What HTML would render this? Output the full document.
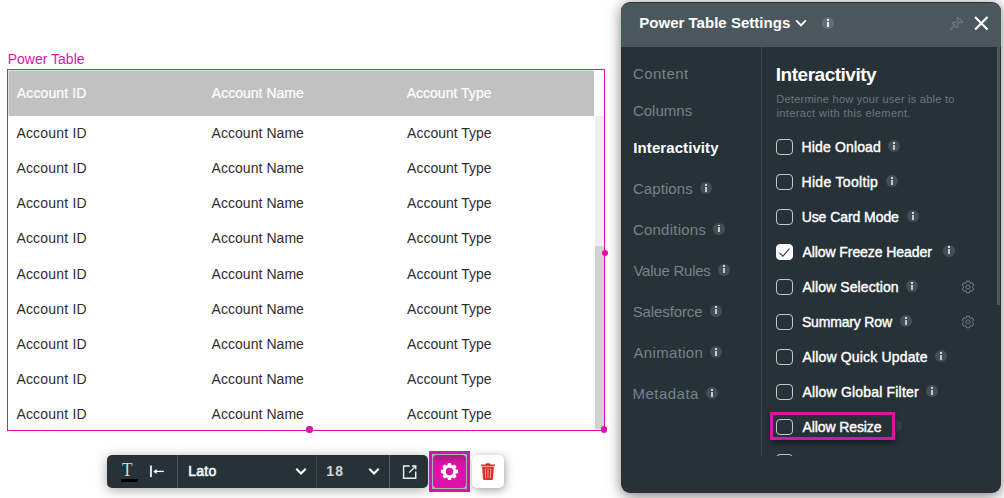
<!DOCTYPE html>
<html>
<head>
<meta charset="utf-8">
<title>Power Table Settings</title>
<style>
html,body{margin:0;padding:0;}
body{width:1004px;height:498px;position:relative;overflow:hidden;background:#ffffff;font-family:"Liberation Sans",sans-serif;}
.a{position:absolute;}
.t{position:absolute;line-height:20px;white-space:nowrap;}
/* table */
#tbl{left:7px;top:69px;width:596px;height:360px;border:1px solid #dc12a9;background:#fff;}
#thead{left:9px;top:71px;width:585px;height:44.7px;background:#c1c1c1;box-shadow:-1px -1px 0 #d3e7d7;}
#strack{left:595px;top:116px;width:9px;height:314px;background:#efefef;}
#sthumb{left:595px;top:246px;width:8.7px;height:183.3px;background:#d2d2d2;}
.dot{width:6.4px;height:6.4px;border-radius:50%;background:#dc12a9;}
/* toolbar */
#tb{left:107px;top:455px;width:321px;height:33px;background:#263238;border-radius:5px;box-shadow:0 2px 12px rgba(0,0,0,.34);}
.dv{width:1px;top:455px;height:33px;background:#46545b;}
#gearhl{left:429px;top:451px;width:35px;height:35px;border:3px solid #dc12a9;background:#a9b8ae;}
#gearbtn{left:433px;top:455px;width:33px;height:33px;border-radius:4px;background:linear-gradient(#ab1b89 0px,#b5188f 3px,#d213a2 7px,#dc12a9 11px);}
#trash{left:471.5px;top:455px;width:32px;height:33px;border-radius:5px;background:#fff;box-shadow:1px 2px 8px rgba(0,0,0,.38);}
/* panel */
#panel{left:621px;top:2px;width:380px;height:490.7px;border-radius:9px;background:#263238;overflow:hidden;box-shadow:0 2.5px 14px rgba(0,0,0,.5);}
#phead{left:0;top:1px;width:380px;height:44px;background:#4a585e;border-radius:8px 8px 0 0;}
#pdiv{left:140px;top:45px;width:1px;height:409px;background:#3b484e;}
#pscroll{display:none;}
#pthumb{left:376px;top:45px;width:3px;height:258px;background:#4a585e;}
.cb{width:15px;height:14px;border:1px solid #c6c8c8;border-radius:4px;left:776px;}
.cb.on{background:#fff;border-color:#fff;}
.info{width:12px;height:12px;border-radius:50%;background:#444f55;}
.info i{position:absolute;left:5px;top:1.8px;width:2px;height:1.8px;background:#d4d8da;}
.info b{position:absolute;left:5px;top:4.5px;width:2px;height:5px;background:#c4c9cb;}
#hl{left:770px;top:412px;width:119px;height:22px;border:3px solid #dc12a9;box-shadow:0 3px 6px rgba(0,0,0,.45);}
</style>
</head>
<body>
<!-- canvas: table -->
<div class="a" id="tbl"></div>
<div class="a" id="thead"></div>
<div class="a" id="strack"></div>
<div class="a" id="sthumb"></div>
<div class="a dot" style="left:601.7px;top:249.7px"></div>
<div class="a dot" style="left:306.4px;top:426.2px"></div>
<div class="a dot" style="left:600.8px;top:426.2px"></div>

<!-- toolbar -->
<div class="a" id="tb"></div>
<div class="a dv" style="left:177px;background:#4a585e"></div>
<div class="a dv" style="left:315.6px;background:#3a474d"></div>
<div class="a dv" style="left:389px;background:#56646b"></div>
<span class="a" style="left:122.4px;top:458.6px;font-family:'Liberation Serif',serif;font-size:18.4px;line-height:22px;color:#d3d8da;transform:scaleX(.93);transform-origin:0 0">T</span>
<div class="a" style="left:121px;top:479px;width:17px;height:3px;background:#000"></div>
<svg class="a" style="left:148px;top:463px" width="18" height="17" viewBox="0 0 18 17">
  <rect x="2.1" y="2.5" width="1.7" height="11.6" fill="#fff"/>
  <path d="M7 8.4 H15.8" stroke="#fff" stroke-width="1.3" fill="none"/>
  <path d="M5.3 8.4 L8.6 5.9 V10.9 Z" fill="#fff"/>
</svg>
<svg class="a" style="left:292.5px;top:464px" width="16" height="14" viewBox="0 0 16 14"><path d="M3.3 4.7 L8 9.4 L12.7 4.7" stroke="#fff" stroke-width="2.1" fill="none"/></svg>
<svg class="a" style="left:365.6px;top:464px" width="16" height="14" viewBox="0 0 16 14"><path d="M3.3 4.7 L8 9.4 L12.7 4.7" stroke="#fff" stroke-width="2.1" fill="none"/></svg>
<svg class="a" style="left:401px;top:463px" width="18" height="18" viewBox="0 0 18 18">
  <path d="M8.6 3 H2.6 V15.3 H14.7 V8.4" stroke="#eef1f2" stroke-width="1.4" fill="none"/>
  <path d="M10.9 3 H14.8 V6.6 M14.6 3.2 L8.2 9.6" stroke="#eef1f2" stroke-width="1.3" fill="none"/>
</svg>
<div class="a" id="gearhl"></div>
<div class="a" id="gearbtn"></div>
<svg class="a" style="left:439.8px;top:462px" width="19" height="19" viewBox="-9.5 -9.5 19 19">
  <g fill="#fff">
    <circle r="6.7"/>
    <rect x="-1.9" y="-8.6" width="3.8" height="17.2" rx="1.2"/>
    <rect x="-1.9" y="-8.6" width="3.8" height="17.2" rx="1.2" transform="rotate(45)"/>
    <rect x="-1.9" y="-8.6" width="3.8" height="17.2" rx="1.2" transform="rotate(90)"/>
    <rect x="-1.9" y="-8.6" width="3.8" height="17.2" rx="1.2" transform="rotate(135)"/>
  </g>
  <circle r="3.7" fill="#dc12a9"/>
</svg>
<div class="a" id="trash"></div>
<svg class="a" style="left:480px;top:462px" width="16" height="19" viewBox="0 0 16 19">
  <path d="M1.1 2.6 H5.3 L6 1.2 H10 L10.7 2.6 H14.9 V4.3 H1.1 Z" fill="#e0312b"/>
  <path d="M2.1 4.7 H13.9 L13 17 Q12.9 18 11.9 18 H4.1 Q3.1 18 3 17 Z" fill="#e0312b"/>
  <path d="M5.5 6.6 V16.2 M8 6.6 V16.2 M10.5 6.6 V16.2" stroke="#f0a09b" stroke-width="0.9"/>
</svg>

<!-- settings panel -->
<div class="a" id="panel">
  <div class="a" id="phead"></div>
  <div class="a" id="pdiv"></div>
  <div class="a" id="pscroll"></div>
  <div class="a" id="pthumb"></div>
</div>
<!-- header icons -->
<svg class="a" style="left:794px;top:17px" width="14" height="12" viewBox="0 0 14 12"><path d="M2.2 3.4 L7 8.4 L11.8 3.4" stroke="#fff" stroke-width="1.9" fill="none"/></svg>
<div class="a info" style="left:822px;top:17.4px;background:#60707a"><i style="background:#f4f4f4"></i><b style="background:#ececec"></b></div>
<svg class="a" style="left:949px;top:16px" width="15" height="15" viewBox="0 0 15 15">
  <g stroke="#6f7d83" stroke-width="1.1" fill="none">
    <path d="M8.8 1.2 L13.8 6.2 L12.6 6.8 L10.4 6.2 L8.6 8 L8.9 10.8 L7.9 11.6 L3.4 7.1 L4.2 6.1 L7 6.4 L8.8 4.6 L8.2 2.4 Z"/>
    <path d="M5.6 9.4 L1.2 13.8"/>
  </g>
</svg>
<svg class="a" style="left:973px;top:15px" width="17" height="17" viewBox="0 0 17 17"><path d="M2.1 1.9 L14.5 14.4 M14.5 1.9 L2.1 14.4" stroke="#fff" stroke-width="2.2" fill="none"/></svg>

<!-- nav info icons -->
<div class="a info" style="left:699.9px;top:182.0px"><i></i><b></b></div>
<div class="a info" style="left:713.3px;top:222.8px"><i></i><b></b></div>
<div class="a info" style="left:717.9px;top:263.6px"><i></i><b></b></div>
<div class="a info" style="left:710.0px;top:304.7px"><i></i><b></b></div>
<div class="a info" style="left:710.0px;top:346.0px"><i></i><b></b></div>
<div class="a info" style="left:705.6px;top:387.0px"><i></i><b></b></div>

<!-- checkboxes -->
<div class="a cb" style="top:139px"></div>
<div class="a cb" style="top:174px"></div>
<div class="a cb" style="top:209px"></div>
<div class="a cb on" style="top:244px"></div>
<svg class="a" style="left:776px;top:244px" width="17" height="17" viewBox="0 0 17 17"><path d="M3.4 8.8 L6.9 12.2 L13.6 4.6" stroke="#34444c" stroke-width="1.1" fill="none"/></svg>
<div class="a cb" style="top:279px"></div>
<div class="a cb" style="top:314px"></div>
<div class="a cb" style="top:349px"></div>
<div class="a cb" style="top:384px"></div>
<div class="a cb" style="top:419px"></div>
<div class="a" style="left:776px;top:454px;width:17px;height:1.5px;overflow:hidden"><div class="a cb" style="left:0;top:0"></div></div>

<!-- row info icons -->
<div class="a info" style="left:887.9px;top:140.0px"><i></i><b></b></div>
<div class="a info" style="left:885.5px;top:175.0px"><i></i><b></b></div>
<div class="a info" style="left:906.5px;top:210.0px"><i></i><b></b></div>
<div class="a info" style="left:942.8px;top:244.7px"><i></i><b></b></div>
<div class="a info" style="left:905.9px;top:280.0px"><i></i><b></b></div>
<div class="a info" style="left:899.8px;top:315.0px"><i></i><b></b></div>
<div class="a info" style="left:935.0px;top:350.0px"><i></i><b></b></div>
<div class="a info" style="left:926.0px;top:385.0px"><i></i><b></b></div>
<div class="a" style="left:895px;top:419px;width:8px;height:14px;overflow:hidden"><div class="a info" style="left:-5.3px;top:0.7px;opacity:.45"></div></div>

<!-- row gear icons -->
<svg class="a" style="left:961px;top:280.4px" width="14" height="14" viewBox="-7 -7 14 14">
  <path d="M1.69 -4.17 L1.45 -5.82 L-1.45 -5.82 L-1.69 -4.17 L-2.77 -3.55 L-4.32 -4.17 L-5.77 -1.65 L-4.46 -0.63 L-4.46 0.63 L-5.77 1.65 L-4.32 4.17 L-2.77 3.55 L-1.69 4.17 L-1.45 5.82 L1.45 5.82 L1.69 4.17 L2.77 3.55 L4.32 4.17 L5.77 1.65 L4.46 0.63 L4.46 -0.63 L5.77 -1.65 L4.32 -4.17 L2.77 -3.55 Z" stroke="#727e83" stroke-width="1" stroke-linejoin="round" fill="none"/>
  <circle r="2.1" stroke="#727e83" stroke-width="1" fill="none"/>
</svg>
<svg class="a" style="left:961px;top:315.3px" width="14" height="14" viewBox="-7 -7 14 14">
  <path d="M1.69 -4.17 L1.45 -5.82 L-1.45 -5.82 L-1.69 -4.17 L-2.77 -3.55 L-4.32 -4.17 L-5.77 -1.65 L-4.46 -0.63 L-4.46 0.63 L-5.77 1.65 L-4.32 4.17 L-2.77 3.55 L-1.69 4.17 L-1.45 5.82 L1.45 5.82 L1.69 4.17 L2.77 3.55 L4.32 4.17 L5.77 1.65 L4.46 0.63 L4.46 -0.63 L5.77 -1.65 L4.32 -4.17 L2.77 -3.55 Z" stroke="#727e83" stroke-width="1" stroke-linejoin="round" fill="none"/>
  <circle r="2.1" stroke="#727e83" stroke-width="1" fill="none"/>
</svg>

<!-- highlight -->
<div class="a" id="hl"></div>

<!-- texts -->
<span class="t" id="t0" style="left:7.64px;top:49.00px;font-size:14px;font-weight:400;color:#dc12a9;letter-spacing:0.018px;">Power Table</span>
<span class="t" id="t1" style="left:16.83px;top:83.00px;font-size:14px;font-weight:400;color:#ffffff;-webkit-text-stroke:0.22px #ffffff;letter-spacing:0.123px;">Account ID</span>
<span class="t" id="t2" style="left:211.83px;top:83.00px;font-size:14px;font-weight:400;color:#ffffff;-webkit-text-stroke:0.22px #ffffff;letter-spacing:0.011px;">Account Name</span>
<span class="t" id="t3" style="left:406.64px;top:83.00px;font-size:14px;font-weight:400;color:#ffffff;-webkit-text-stroke:0.22px #ffffff;letter-spacing:0.027px;">Account Type</span>
<span class="t" id="t4" style="left:16.42px;top:123.00px;font-size:14px;font-weight:400;color:#2e2e2e;letter-spacing:0.188px;">Account ID</span>
<span class="t" id="t5" style="left:211.49px;top:123.00px;font-size:14px;font-weight:400;color:#2e2e2e;letter-spacing:0.054px;">Account Name</span>
<span class="t" id="t6" style="left:407.12px;top:123.00px;font-size:14px;font-weight:400;color:#2e2e2e;letter-spacing:-0.006px;">Account Type</span>
<span class="t" id="t7" style="left:16.42px;top:158.00px;font-size:14px;font-weight:400;color:#2e2e2e;letter-spacing:0.188px;">Account ID</span>
<span class="t" id="t8" style="left:211.49px;top:158.00px;font-size:14px;font-weight:400;color:#2e2e2e;letter-spacing:0.054px;">Account Name</span>
<span class="t" id="t9" style="left:407.12px;top:158.00px;font-size:14px;font-weight:400;color:#2e2e2e;letter-spacing:-0.006px;">Account Type</span>
<span class="t" id="t10" style="left:16.42px;top:193.00px;font-size:14px;font-weight:400;color:#2e2e2e;letter-spacing:0.188px;">Account ID</span>
<span class="t" id="t11" style="left:211.49px;top:193.00px;font-size:14px;font-weight:400;color:#2e2e2e;letter-spacing:0.054px;">Account Name</span>
<span class="t" id="t12" style="left:407.12px;top:193.00px;font-size:14px;font-weight:400;color:#2e2e2e;letter-spacing:-0.006px;">Account Type</span>
<span class="t" id="t13" style="left:16.42px;top:228.00px;font-size:14px;font-weight:400;color:#2e2e2e;letter-spacing:0.188px;">Account ID</span>
<span class="t" id="t14" style="left:211.49px;top:228.00px;font-size:14px;font-weight:400;color:#2e2e2e;letter-spacing:0.054px;">Account Name</span>
<span class="t" id="t15" style="left:407.12px;top:228.00px;font-size:14px;font-weight:400;color:#2e2e2e;letter-spacing:-0.006px;">Account Type</span>
<span class="t" id="t16" style="left:16.42px;top:264.00px;font-size:14px;font-weight:400;color:#2e2e2e;letter-spacing:0.188px;">Account ID</span>
<span class="t" id="t17" style="left:211.49px;top:264.00px;font-size:14px;font-weight:400;color:#2e2e2e;letter-spacing:0.054px;">Account Name</span>
<span class="t" id="t18" style="left:407.12px;top:264.00px;font-size:14px;font-weight:400;color:#2e2e2e;letter-spacing:-0.006px;">Account Type</span>
<span class="t" id="t19" style="left:16.42px;top:299.00px;font-size:14px;font-weight:400;color:#2e2e2e;letter-spacing:0.188px;">Account ID</span>
<span class="t" id="t20" style="left:211.49px;top:299.00px;font-size:14px;font-weight:400;color:#2e2e2e;letter-spacing:0.054px;">Account Name</span>
<span class="t" id="t21" style="left:407.12px;top:299.00px;font-size:14px;font-weight:400;color:#2e2e2e;letter-spacing:-0.006px;">Account Type</span>
<span class="t" id="t22" style="left:16.42px;top:334.00px;font-size:14px;font-weight:400;color:#2e2e2e;letter-spacing:0.188px;">Account ID</span>
<span class="t" id="t23" style="left:211.49px;top:334.00px;font-size:14px;font-weight:400;color:#2e2e2e;letter-spacing:0.054px;">Account Name</span>
<span class="t" id="t24" style="left:407.12px;top:334.00px;font-size:14px;font-weight:400;color:#2e2e2e;letter-spacing:-0.006px;">Account Type</span>
<span class="t" id="t25" style="left:16.42px;top:369.00px;font-size:14px;font-weight:400;color:#2e2e2e;letter-spacing:0.188px;">Account ID</span>
<span class="t" id="t26" style="left:211.49px;top:369.00px;font-size:14px;font-weight:400;color:#2e2e2e;letter-spacing:0.054px;">Account Name</span>
<span class="t" id="t27" style="left:407.12px;top:369.00px;font-size:14px;font-weight:400;color:#2e2e2e;letter-spacing:-0.006px;">Account Type</span>
<span class="t" id="t28" style="left:16.42px;top:404.00px;font-size:14px;font-weight:400;color:#2e2e2e;letter-spacing:0.188px;">Account ID</span>
<span class="t" id="t29" style="left:211.49px;top:404.00px;font-size:14px;font-weight:400;color:#2e2e2e;letter-spacing:0.054px;">Account Name</span>
<span class="t" id="t30" style="left:407.12px;top:404.00px;font-size:14px;font-weight:400;color:#2e2e2e;letter-spacing:-0.006px;">Account Type</span>
<span class="t" id="t31" style="left:188.36px;top:461.00px;font-size:14px;font-weight:400;color:#f4f6f7;-webkit-text-stroke:0.6px #f4f6f7;letter-spacing:0.206px;">Lato</span>
<span class="t" id="t32" style="left:326.22px;top:461.00px;font-size:14px;font-weight:700;color:#d2d6d8;letter-spacing:1.143px;">18</span>
<span class="t" id="t33" style="left:639.22px;top:13.00px;font-size:15px;font-weight:700;color:#ffffff;letter-spacing:0.024px;">Power Table Settings</span>
<span class="t" id="t34" style="left:632.88px;top:64.00px;font-size:15px;font-weight:400;color:#76838a;letter-spacing:0.472px;">Content</span>
<span class="t" id="t35" style="left:632.88px;top:101.00px;font-size:15px;font-weight:400;color:#76838a;letter-spacing:0.015px;">Columns</span>
<span class="t" id="t36" style="left:633.31px;top:138.00px;font-size:15px;font-weight:700;color:#ffffff;letter-spacing:0.085px;">Interactivity</span>
<span class="t" id="t37" style="left:632.88px;top:179.00px;font-size:15px;font-weight:400;color:#76838a;letter-spacing:0.092px;">Captions</span>
<span class="t" id="t38" style="left:632.88px;top:220.00px;font-size:15px;font-weight:400;color:#76838a;letter-spacing:0.232px;">Conditions</span>
<span class="t" id="t39" style="left:633.42px;top:261.00px;font-size:15px;font-weight:400;color:#76838a;letter-spacing:-0.233px;">Value Rules</span>
<span class="t" id="t40" style="left:632.63px;top:302.00px;font-size:15px;font-weight:400;color:#76838a;letter-spacing:-0.102px;">Salesforce</span>
<span class="t" id="t41" style="left:633.45px;top:343.00px;font-size:15px;font-weight:400;color:#76838a;letter-spacing:0.337px;">Animation</span>
<span class="t" id="t42" style="left:632.45px;top:384.00px;font-size:15px;font-weight:400;color:#76838a;letter-spacing:0.493px;">Metadata</span>
<span class="t" id="t43" style="left:775.82px;top:65.00px;font-size:19px;font-weight:700;color:#ffffff;letter-spacing:-0.486px;">Interactivity</span>
<span class="t" id="t44" style="left:776.29px;top:89.00px;font-size:11px;font-weight:400;color:#6c787e;letter-spacing:0.245px;">Determine how your user is able to</span>
<span class="t" id="t45" style="left:776.41px;top:103.00px;font-size:11px;font-weight:400;color:#6c787e;letter-spacing:0.380px;">interact with this element.</span>
<span class="t" id="t46" style="left:801.52px;top:137.00px;font-size:14px;font-weight:400;color:#ffffff;-webkit-text-stroke:0.4px #ffffff;letter-spacing:0.148px;">Hide Onload</span>
<span class="t" id="t47" style="left:801.52px;top:172.00px;font-size:14px;font-weight:400;color:#ffffff;-webkit-text-stroke:0.4px #ffffff;letter-spacing:0.317px;">Hide Tooltip</span>
<span class="t" id="t48" style="left:801.64px;top:207.00px;font-size:14px;font-weight:400;color:#ffffff;-webkit-text-stroke:0.4px #ffffff;letter-spacing:-0.064px;">Use Card Mode</span>
<span class="t" id="t49" style="left:802.41px;top:242.00px;font-size:14px;font-weight:400;color:#ffffff;-webkit-text-stroke:0.4px #ffffff;letter-spacing:-0.072px;">Allow Freeze Header</span>
<span class="t" id="t50" style="left:802.41px;top:277.00px;font-size:14px;font-weight:400;color:#ffffff;-webkit-text-stroke:0.4px #ffffff;letter-spacing:0.093px;">Allow Selection</span>
<span class="t" id="t51" style="left:801.93px;top:312.00px;font-size:14px;font-weight:400;color:#ffffff;-webkit-text-stroke:0.4px #ffffff;letter-spacing:-0.169px;">Summary Row</span>
<span class="t" id="t52" style="left:802.41px;top:347.00px;font-size:14px;font-weight:400;color:#ffffff;-webkit-text-stroke:0.4px #ffffff;letter-spacing:0.168px;">Allow Quick Update</span>
<span class="t" id="t53" style="left:802.41px;top:382.00px;font-size:14px;font-weight:400;color:#ffffff;-webkit-text-stroke:0.4px #ffffff;letter-spacing:0.188px;">Allow Global Filter</span>
<span class="t" id="t54" style="left:802.41px;top:417.00px;font-size:14px;font-weight:400;color:#ffffff;-webkit-text-stroke:0.4px #ffffff;letter-spacing:-0.093px;">Allow Resize</span>
</body>
</html>
